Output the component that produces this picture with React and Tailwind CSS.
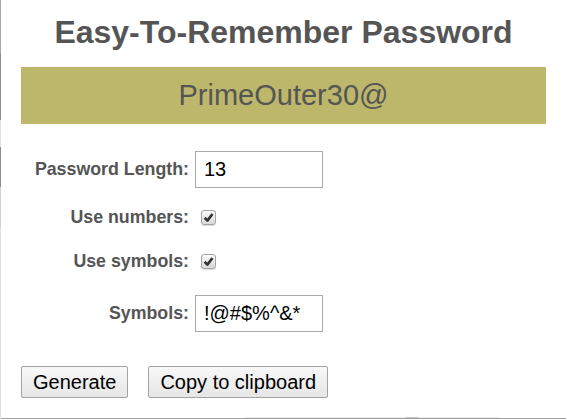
import React, { useState } from "react";

function Check({ checked, onToggle }) {
  return (
    <button
      type="button"
      onClick={onToggle}
      className="ml-[12px] w-[15px] h-[15px] rounded-[3px] border border-[#a3a3a3] bg-gradient-to-b from-[#fbfbfb] to-[#d8d8d8] shadow-[0_1px_1px_rgba(0,0,0,0.15)] flex items-center justify-center"
    >
      {checked && (
        <svg width="11" height="11" viewBox="0 0 10 10">
          <path d="M1.5 5.2 L4 7.8 L8.6 1.8" fill="none" stroke="#333" strokeWidth="2.4" strokeLinejoin="round" />
        </svg>
      )}
    </button>
  );
}

export default function App() {
  const [length, setLength] = useState("13");
  const [numbers, setNumbers] = useState(true);
  const [symbols, setSymbols] = useState(true);
  const [symbolSet, setSymbolSet] = useState("!@#$%^&*");

  return (
    <div className="w-[566px] h-[419px] flex bg-white overflow-hidden font-['Liberation_Sans',Arial,sans-serif]">
      {/* left frame edge */}
      <div className="w-px flex flex-col">
        <div className="h-[53px] bg-[#a8a8a8]" />
        <div className="h-[67px] bg-[#8c8c8c]" />
        <div className="h-[27px] bg-[#e2e2e2]" />
        <div className="h-[40px] bg-[#8c8c8c]" />
        <div className="h-[40px] bg-[#d0d0d0]" />
        <div className="flex-1 bg-[#e0e0e0]" />
      </div>

      <div className="flex-1 flex flex-col">
        <main className="flex-1 px-[20px]">
          <h1 className="pt-[14px] text-center text-[32px] leading-[36px] font-bold text-[#555]">
            Easy-To-Remember Password
          </h1>

          <div className="mt-[17px] h-[57px] bg-[#BDB76B] flex items-center justify-center text-[29px] text-[#555]">
            PrimeOuter30@
          </div>

          <div className="mt-[27px] flex flex-col text-[17.8px] font-bold text-[#555]">
            <div className="flex items-center h-[37px]">
              <label className="w-[168px] text-right">Password Length:</label>
              <input
                value={length}
                onChange={(e) => setLength(e.target.value)}
                className="ml-[6px] w-[128px] h-[37px] border border-[#a9a9a9] px-[8px] text-[20px] font-normal text-black outline-none"
              />
            </div>
            <div className="mt-[17px] flex items-center h-[24px]">
              <label className="w-[168px] text-right">Use numbers:</label>
              <Check checked={numbers} onToggle={() => setNumbers(!numbers)} />
            </div>
            <div className="mt-[20px] flex items-center h-[24px]">
              <label className="w-[168px] text-right">Use symbols:</label>
              <Check checked={symbols} onToggle={() => setSymbols(!symbols)} />
            </div>
            <div className="mt-[22px] flex items-center h-[37px]">
              <label className="w-[168px] text-right">Symbols:</label>
              <input
                value={symbolSet}
                onChange={(e) => setSymbolSet(e.target.value)}
                className="ml-[6px] w-[128px] h-[37px] border border-[#a9a9a9] px-[8px] text-[20px] font-normal text-black outline-none"
              />
            </div>
          </div>

          <div className="mt-[34px] flex gap-[20px]">
            <button className="h-[32px] px-[11px] border border-[#a3a3a3] rounded-[2px] bg-gradient-to-b from-[#f8f8f8] to-[#e6e6e6] text-[20px] leading-[23px] text-black">
              Generate
            </button>
            <button className="h-[32px] px-[11px] border border-[#a3a3a3] rounded-[2px] bg-gradient-to-b from-[#f8f8f8] to-[#e6e6e6] text-[20px] leading-[23px] text-black">
              Copy to clipboard
            </button>
          </div>
        </main>

        {/* bottom frame edge */}
        <div className="h-[2px] flex flex-col">
          <div className="h-px flex">
            <div className="w-[244px]" />
            <div className="w-[161px] bg-[#ececec]" />
            <div className="w-[12px] bg-[#c4c4c4]" />
            <div className="w-[81px] bg-[#ececec]" />
          </div>
          <div className="h-px bg-[#a0a0a0]" />
        </div>
      </div>
    </div>
  );
}
